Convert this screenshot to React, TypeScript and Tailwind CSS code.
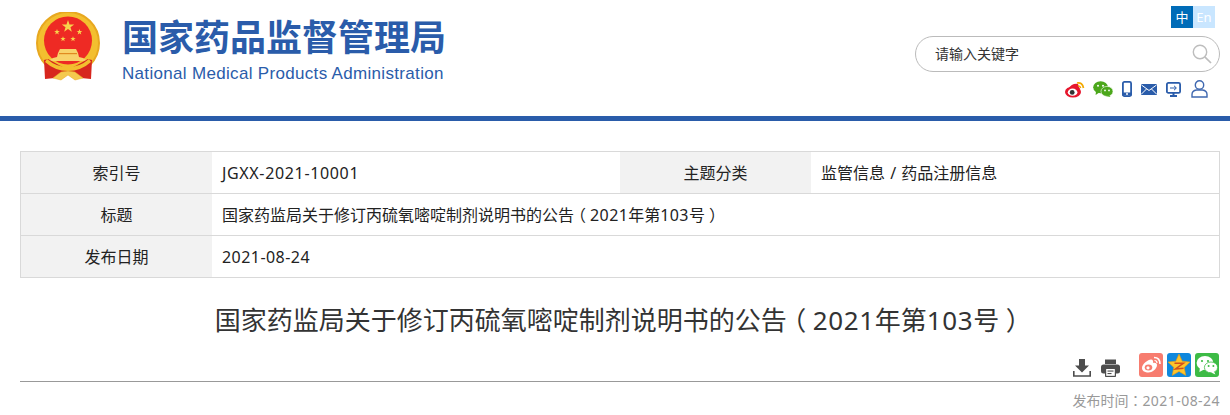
const FONT = "font-['Noto_Sans','Noto_Sans_CJK_SC',sans-serif]";
const BLUE = "#2a5caa";

const Star: React.FC<{ cx: number; cy: number; r: number }> = ({ cx, cy, r }) => {
  const points = Array.from({ length: 10 }, (_, i) => {
    const rad = i % 2 === 0 ? r : r * 0.4;
    const a = (Math.PI / 5) * i - Math.PI / 2;
    return `${cx + rad * Math.cos(a)},${cy + rad * Math.sin(a)}`;
  }).join(" ");
  return <polygon points={points} fill="#f7d44c" />;
};

const Emblem = () => (
  <svg width="64" height="69" viewBox="0 0 64 69" className="shrink-0">
    <circle cx="32" cy="31" r="31" fill="#f3bf2f" stroke="#e8a820" strokeWidth="2" />
    <circle cx="32" cy="28.5" r="24" fill="#ee2a24" />
    <Star cx={32} cy={14.5} r={6.5} />
    <Star cx={21} cy={20} r={3} />
    <Star cx={43.5} cy={20} r={3} />
    <Star cx={27} cy={27} r={2.8} />
    <Star cx={37} cy={27} r={2.8} />
    <path d="M24 37 L40 37 L42 41 L43 45 L47 46 L52 49 L12 49 L17 46 L21 45 L22 41 Z" fill="#f8d26a" />
    <rect x="23" y="41" width="18" height="1.2" fill="#e08a20" />
    <path d="M8 48 L12 47 L32 58 L52 47 L56 48 L55 67 L45 66 L32 61 L19 66 L9 67 Z" fill="#d7261e" />
    <path d="M11 47 Q20 55 32 55 Q44 55 53 47 L55 50 Q45 59 32 59 Q19 59 9 50 Z" fill="#f3bf2f" />
    <path d="M17 66 L25 60 L32 59 L39 60 L47 66 L39 68 L32 63 L25 68 Z" fill="#f4c94e" stroke="#e8a820" strokeWidth="0.5" />
  </svg>
);

const Logo = () => (
  <div className="flex items-start pl-[36px] pt-[12px] font-['Liberation_Sans','Noto_Sans_CJK_SC',sans-serif]">
    <Emblem />
    <div className="ml-[22px] pt-[4px]">
      <div className="text-[36px] leading-[46px] font-bold text-[#2a5caa] whitespace-nowrap">国家药品监督管理局</div>
      <div className="text-[17px] leading-[24px] tracking-[0.32px] text-[#2a5caa] whitespace-nowrap">National Medical Products Administration</div>
    </div>
  </div>
);

const SearchGlass = () => (
  <svg width="20" height="20" viewBox="0 0 20 20" fill="none" stroke="#bdbdbd" strokeWidth="1.4">
    <circle cx="8" cy="8" r="6.7" />
    <path d="M12.8 12.8 L19 19" strokeWidth="1.7" />
  </svg>
);

const WeiboColor = () => (
  <svg width="20" height="17" viewBox="0 0 20 17">
    <ellipse cx="8" cy="11" rx="8" ry="5.6" fill="#e6162d" />
    <path d="M3 8 Q7 2 13 3 Q14 6 15 8 L8 9 Z" fill="#e6162d" />
    <ellipse cx="7.6" cy="11.2" rx="4.8" ry="3.6" fill="#fff" />
    <circle cx="7.2" cy="11.4" r="2.4" fill="#333" />
    <path d="M12 2 Q17.5 1 18.5 7" stroke="#f2a900" strokeWidth="1.7" fill="none" />
    <path d="M13 5 Q15.2 4.6 15.8 7" stroke="#f2a900" strokeWidth="1.3" fill="none" />
  </svg>
);

const WechatColor = () => (
  <svg width="20" height="16" viewBox="0 0 20 16">
    <ellipse cx="7.6" cy="6.2" rx="7.4" ry="6" fill="#4ca71b" />
    <path d="M3 10 L2.6 14 L7 11 Z" fill="#4ca71b" />
    <circle cx="5" cy="4.8" r="1" fill="#fff" />
    <circle cx="10" cy="4.8" r="1" fill="#fff" />
    <ellipse cx="14" cy="10.4" rx="6" ry="5" fill="#4ca71b" stroke="#fff" strokeWidth="0.6" />
    <path d="M16 14 L17.5 16 L13 15 Z" fill="#4ca71b" />
    <circle cx="12" cy="9.4" r="0.9" fill="#fff" />
    <circle cx="16" cy="9.4" r="0.9" fill="#fff" />
  </svg>
);

const Phone = () => (
  <svg width="10" height="16" viewBox="0 0 10 16">
    <rect x="0.9" y="0.9" width="8.2" height="14.2" rx="1.5" fill="#fff" stroke={BLUE} strokeWidth="1.8" />
    <rect x="0" y="11.5" width="10" height="3" fill={BLUE} />
    <circle cx="5" cy="13" r="1" fill="#fff" />
  </svg>
);

const Mail = () => (
  <svg width="16" height="11" viewBox="0 0 16 11">
    <rect width="16" height="11" rx="1" fill={BLUE} />
    <path d="M0.5 1 L8 6.5 L15.5 1 M0.5 10 L5.5 5 M15.5 10 L10.5 5" stroke="#fff" strokeWidth="1" fill="none" />
  </svg>
);

const Screen = () => (
  <svg width="15" height="15" viewBox="0 0 15 15">
    <rect x="0.9" y="0.9" width="13.2" height="10" rx="1.5" fill="#fff" stroke={BLUE} strokeWidth="1.8" />
    <path d="M4 6 L10 6 M8 3.8 L10.4 6 L8 8.2" stroke={BLUE} strokeWidth="1" fill="none" />
    <path d="M6.5 11 L8.5 11 L8.5 13 L11 13 L11 15 L4 15 L4 13 L6.5 13 Z" fill={BLUE} />
  </svg>
);

const User = () => (
  <svg width="17" height="18" viewBox="0 0 17 18" fill="none" stroke="#3f68b0" strokeWidth="1.4">
    <circle cx="8.5" cy="5" r="4.2" />
    <path d="M1 17 L1 14.5 Q1 10.6 5.5 10 L11.5 10 Q16 10.6 16 14.5 L16 17 Z" />
  </svg>
);

const Download = () => (
  <svg width="18" height="18" viewBox="0 0 18 18" fill="#4d4d4d">
    <path d="M6 0 L12 0 L12 6.5 L16 6.5 L9 13.5 L2 6.5 L6 6.5 Z" />
    <path d="M0.8 12 L0.8 17 L17.2 17 L17.2 12" fill="none" stroke="#4d4d4d" strokeWidth="1.6" />
  </svg>
);

const Printer = () => (
  <svg width="19" height="18" viewBox="0 0 19 18">
    <path d="M4 0.5 L15 0.5 L15 5 L4 5 Z" fill="#4d4d4d" />
    <rect x="0" y="5.5" width="19" height="9" rx="2.5" fill="#4d4d4d" />
    <rect x="4" y="9" width="11" height="9" rx="0.8" fill="#4d4d4d" />
    <rect x="5.2" y="10" width="8.6" height="6.8" fill="#fff" />
    <rect x="6.5" y="11.5" width="6" height="1.1" fill="#4d4d4d" />
    <rect x="6.5" y="14" width="4" height="1.1" fill="#4d4d4d" />
  </svg>
);

const WeiboShare = () => (
  <svg width="22" height="18" viewBox="0 0 22 18">
    <path d="M2 12 C2 8 8 3.5 11 3.5 C13 3.5 13.5 5.5 13 7 C15 6.5 17 7 17 9 C17 13 12 16.5 8.5 16.5 C5 16.5 2 15 2 12 Z" fill="#fff" />
    <ellipse cx="8.5" cy="11.5" rx="3.8" ry="3" fill="#f77c6f" />
    <circle cx="8" cy="11.8" r="1.6" fill="#fff" />
    <path d="M14 1.5 Q20 1.5 20 8" stroke="#fff" strokeWidth="1.6" fill="none" />
    <path d="M14.5 4.5 Q17 4.5 17 7" stroke="#fff" strokeWidth="1.2" fill="none" />
  </svg>
);

const Qzone = () => (
  <svg width="24" height="24" viewBox="0 0 24 24">
    <polygon points="12,1 15.2,8.2 23,9 17.2,14.4 18.8,22.4 12,18.4 5.2,22.4 6.8,14.4 1,9 8.8,8.2" fill="#fdc52c" stroke="#e89a10" strokeWidth="0.6" />
    <path d="M7.5 10.2 L16.5 10.2 L8.5 16 L16.6 15.2" stroke="#d2501c" strokeWidth="1.5" fill="none" />
  </svg>
);

const WechatShare = () => (
  <svg width="22" height="20" viewBox="0 0 22 20">
    <ellipse cx="9" cy="8" rx="8.4" ry="7" fill="#fff" />
    <path d="M4 12 L3.4 17 L9 14 Z" fill="#fff" />
    <circle cx="6" cy="6" r="1.1" fill="#3dbb46" />
    <circle cx="12" cy="6" r="1.1" fill="#3dbb46" />
    <ellipse cx="15" cy="12.4" rx="6.6" ry="5.4" fill="#fff" stroke="#3dbb46" strokeWidth="0.8" />
    <path d="M18 16.5 L19.4 19.5 L15 17.6 Z" fill="#fff" />
    <circle cx="12.6" cy="11" r="1" fill="#3dbb46" />
    <circle cx="17.4" cy="11" r="1" fill="#3dbb46" />
  </svg>
);

const ShareBox: React.FC<{ color: string; children: React.ReactNode }> = ({ color, children }) => (
  <div className={`flex h-6 w-6 items-center justify-center rounded-[3px] ${color}`}>{children}</div>
);

const Header = () => (
  <header className="flex h-[116px] justify-between">
    <Logo />
    <div className="flex w-[305px] mr-[10px] flex-col items-end pt-[6px]">
      <div className="mr-[5px] flex h-[22px] text-[13px] leading-[22px] text-white">
        <span className="w-[22px] bg-[#006cb8] text-center">中</span>
        <span className="w-[22px] bg-[#c9e6ff] text-center">En</span>
      </div>
      <div className="mt-[8px] flex h-[36px] w-[305px] items-center justify-between rounded-[18px] border border-[#bbbbbb] pl-[19px] pr-[7px]">
        <span className="pb-[2px] text-[14px] text-[#333333]">请输入关键字</span>
        <SearchGlass />
      </div>
      <div className="mt-[8px] mr-[12px] flex h-[18px] items-center">
        <WeiboColor />
        <span className="ml-[8px]"><WechatColor /></span>
        <span className="ml-[9px]"><Phone /></span>
        <span className="ml-[9px]"><Mail /></span>
        <span className="ml-[9px]"><Screen /></span>
        <span className="ml-[10px]"><User /></span>
      </div>
    </div>
  </header>
);

const Label: React.FC<{ text: string }> = ({ text }) => (
  <div className="flex w-[191px] shrink-0 items-center justify-center bg-[#f2f2f2]">{text}</div>
);

const Value: React.FC<{ children: React.ReactNode; className?: string }> = ({ children, className }) => (
  <div className={`flex items-center px-[10px] ${className ?? ""}`}>
    <span className="whitespace-pre">{children}</span>
  </div>
);

// halt 收成半宽后左右补回，括号就落在字身中间
const Paren: React.FC<{ text: string }> = ({ text }) => (
  <span className="mx-[0.25em] [font-feature-settings:'halt']">{text}</span>
);

const Title = () => (
  <>
    国家药监局关于修订丙硫氧嘧啶制剂说明书的公告
    <Paren text="（" />
    <span className="tracking-[0.025em]">2021</span>年第<span className="tracking-[0.025em]">103</span>号
    <Paren text="）" />
  </>
);

const InfoTable = () => (
  <div className="ml-[20px] mt-[30px] w-[1200px] border border-b-0 border-[#d9d9d9] text-[16px] text-[#222222]">
    <div className="flex h-[42px] border-b border-[#d9d9d9]">
      <Label text="索引号" />
      <Value className="w-[408px] tracking-[0.65px]">JGXX-2021-10001</Value>
      <Label text="主题分类" />
      <Value className="flex-1">
        监管信息<span className="mx-[1px]"> / </span>药品注册信息
      </Value>
    </div>
    <div className="flex h-[42px] border-b border-[#d9d9d9]">
      <Label text="标题" />
      <Value className="flex-1"><Title /></Value>
    </div>
    <div className="flex h-[42px] border-b border-[#d9d9d9]">
      <Label text="发布日期" />
      <Value className="flex-1 tracking-[0.45px]">2021-08-24</Value>
    </div>
  </div>
);

const ArticleHead = () => (
  <div className="ml-[20px] w-[1200px]">
    <h1 className="mt-[23px] h-[38px] text-center text-[26px] leading-[38px] font-normal text-[#333333]">
      <Title />
    </h1>
    <div className="flex h-[43px] items-end justify-end border-b border-[#999999] pb-[4px] pr-[1px]">
      <Download />
      <span className="ml-[10px]"><Printer /></span>
      <div className="ml-[19px] flex gap-[4px]">
        <ShareBox color="bg-[#f77c6f]"><WeiboShare /></ShareBox>
        <ShareBox color="bg-[#0f88dd]"><Qzone /></ShareBox>
        <ShareBox color="bg-[#3dbb46]"><WechatShare /></ShareBox>
      </div>
    </div>
    <div className="mt-[9px] text-right text-[14px] leading-[18px] text-[#999999]">
      发布时间<span className="font-['Noto_Sans_CJK_TC']">：</span>
      <span className="tracking-[0.45px]">2021-08-24</span>
    </div>
  </div>
);

export default function App() {
  return (
    <div className={`h-[415px] w-[1230px] overflow-hidden bg-white ${FONT}`}>
      <Header />
      <div className="h-[5px] bg-[#2a5caa]" />
      <InfoTable />
      <ArticleHead />
    </div>
  );
}
